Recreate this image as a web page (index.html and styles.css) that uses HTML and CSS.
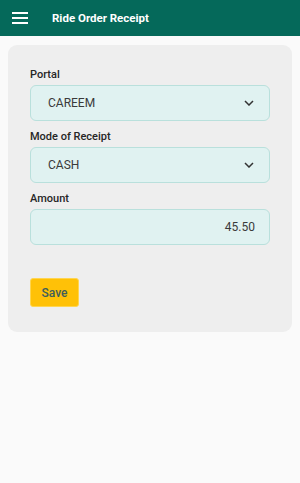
FILE: index.html
```html
<!DOCTYPE html>
<html lang="en">

<head>
  <meta charset="UTF-8">
  <meta name="viewport" content="width=device-width, initial-scale=1.0">
  <title>Ride Order Receipt</title>
  <link rel="stylesheet" href="styles.css">
</head>

<body>
  <header class="app-bar">
    <span class="menu">
      <svg width="16" height="12" viewBox="0 0 16 12">
        <rect x="0" y="0" width="16" height="2" fill="#fff"></rect>
        <rect x="0" y="5" width="16" height="2" fill="#fff"></rect>
        <rect x="0" y="10" width="16" height="2" fill="#fff"></rect>
      </svg>
    </span>
    <h1 class="title">Ride Order Receipt</h1>
  </header>

  <div class="card">
    <div class="field">
      <label class="label">Portal</label>
      <div class="box select">
        <span class="value">CAREEM</span>
        <svg class="chevron" width="10" height="6" viewBox="0 0 10 6">
          <polyline points="1,1 5,5 9,1" fill="none" stroke="#333" stroke-width="1.5"></polyline>
        </svg>
      </div>
    </div>

    <div class="field">
      <label class="label">Mode of Receipt</label>
      <div class="box select">
        <span class="value">CASH</span>
        <svg class="chevron" width="10" height="6" viewBox="0 0 10 6">
          <polyline points="1,1 5,5 9,1" fill="none" stroke="#333" stroke-width="1.5"></polyline>
        </svg>
      </div>
    </div>

    <div class="field">
      <label class="label">Amount</label>
      <div class="box amount">
        <span class="value">45.50</span>
      </div>
    </div>

    <button class="save">Save</button>
  </div>
</body>

</html>
```

FILE: styles.css
```css
* {
  margin: 0;
  padding: 0;
  box-sizing: border-box;
}

body {
  background: #fafafa;
  font-family: Roboto, "Noto Sans", sans-serif;
  color: #222;
}

.app-bar {
  display: flex;
  align-items: center;
  height: 36px;
  background: #05695a;
  color: #fff;
}

.menu {
  display: flex;
  width: 52px;
  padding-left: 12px;
}

.title {
  font-size: 11.5px;
  font-weight: bold;
}

.card {
  margin: 9px 8px;
  padding: 23px 22px 25px;
  background: #eeeeee;
  border-radius: 9px;
}

.field {
  margin-bottom: 9px;
}

.label {
  display: block;
  font-size: 11px;
  line-height: 14px;
  font-weight: 500;
  color: #262626;
  margin-bottom: 3px;
}

.box {
  display: flex;
  align-items: center;
  height: 36px;
  background: #e0f2f1;
  border: 1px solid #b9e0dc;
  border-radius: 6px;
  font-size: 12px;
  color: #3a3a3a;
}

.select {
  justify-content: space-between;
  padding: 0 15px 0 17px;
}

.amount {
  justify-content: flex-end;
  padding-right: 14px;
}

.save {
  display: block;
  margin-top: 33px;
  width: 49px;
  height: 29px;
  background: #ffc107;
  border: 1px solid #ffd54f;
  border-radius: 3px;
  font-family: Roboto, "Noto Sans", sans-serif;
  font-size: 12px;
  font-weight: 500;
  color: #3e5e5c;
}
```
